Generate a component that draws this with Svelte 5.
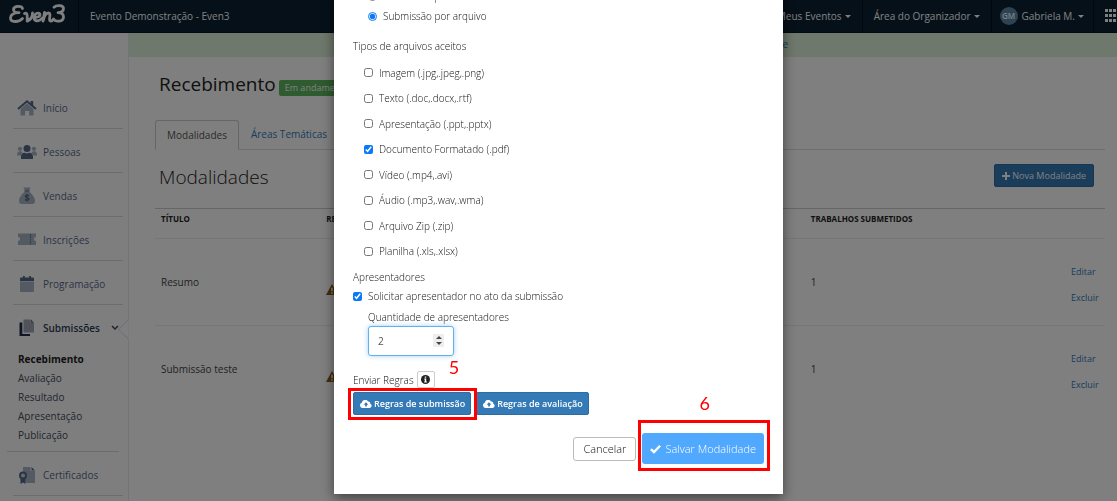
<script>
  const menu = [
    { id: 'home', label: 'Início' },
    { id: 'people', label: 'Pessoas' },
    { id: 'money', label: 'Vendas' },
    { id: 'ticket', label: 'Inscrições' },
    { id: 'calendar', label: 'Programação' },
    { id: 'files', label: 'Submissões', children: ['Recebimento', 'Avaliação', 'Resultado', 'Apresentação', 'Publicação'] },
    { id: 'certificate', label: 'Certificados' }
  ];
  const rows = [
    { title: 'Resumo', total: 1 },
    { title: 'Submissão teste', total: 1 }
  ];
  let mode = $state('arquivo');
  let types = $state([
    { label: 'Imagem (.jpg,.jpeg,.png)', on: false },
    { label: 'Texto (.doc,.docx,.rtf)', on: false },
    { label: 'Apresentação (.ppt,.pptx)', on: false },
    { label: 'Documento Formatado (.pdf)', on: true },
    { label: 'Vídeo (.mp4,.avi)', on: false },
    { label: 'Áudio (.mp3,.wav,.wma)', on: false },
    { label: 'Arquivo Zip (.zip)', on: false },
    { label: 'Planilha (.xls,.xlsx)', on: false }
  ]);
  let askPresenter = $state(true);
  let presenters = $state(2);
  const step = (n) => (presenters = Math.max(1, presenters + n));
</script>

{#snippet cloud()}
  <svg class="cloud" viewBox="0 0 24 16" aria-hidden="true">
    <path fill="currentColor" fill-rule="evenodd" d="M5.5 16A5.5 5.5 0 0 1 3.6 5.3 6.6 6.6 0 0 1 16 3.2a3.6 3.6 0 0 1 4.4 4.3A4.4 4.4 0 0 1 19.500 16zM12 4.500 7.300 9.300h3V13h3.400V9.300h3z" />
  </svg>
{/snippet}

{#snippet icon(id)}
  <svg class="icon" viewBox="0 0 20 20" aria-hidden="true">
    {#if id === 'home'}
      <path fill="#a9b4c2" d="M3.500 11 10 5.200 16.500 11v6.500h-4.300v-4.600H8v4.600H3.500z" />
      <path fill="none" stroke="#56698a" stroke-width="2" d="M1 11 10 3.300 19 11" />
      <path fill="#56698a" d="M13.600 3h2.600v5l-2.600-2.200z" />
    {:else if id === 'people'}
      <g fill="#a9b4c2"><circle cx="3" cy="6.800" r="2.100" /><circle cx="17" cy="6.800" r="2.100" /><path d="M0 13.500c0-3 1-4.200 3-4.200 1.300 0 2 .5 2.500 1.200L3.800 13.500zM20 13.500c0-3-1-4.200-3-4.200-1.300 0-2 .5-2.500 1.200l1.700 3z" /></g>
      <g fill="#56698a"><circle cx="10" cy="6.400" r="3.500" /><path d="M4 17v-2.300c0-2.600 1.500-4 3.600-4 1.600.7 3.200.7 4.800 0 2.100 0 3.600 1.400 3.600 4V17z" /></g>
    {:else if id === 'money'}
      <path fill="#a9b4c2" d="M6.300 1.500h7.400L12 4.500H8zM7.600 6h4.800c3 2 5.600 6 5.600 9 0 1.800-1 3-2.800 3H4.800C3 18 2 16.800 2 15c0-3 2.600-7 5.600-9z" />
      <path fill="#56698a" d="M7.500 4.300h5v1.400h-5z" />
      <path fill="none" stroke="#56698a" stroke-width="1.200" d="M12 9.800c-.8-.8-3.700-1-3.700.6 0 1.700 3.600.8 3.600 2.600 0 1.600-3 1.500-3.900.5M10 8v7.500" />
    {:else if id === 'ticket'}
      <path fill="#a9b4c2" fill-rule="evenodd" d="M1 3.500h18v3.600a2 2 0 0 0 0 4v3.900H1v-3.900a2 2 0 0 0 0-4z" />
      <path stroke="#56698a" stroke-width="1.200" stroke-dasharray="1.400 1.200" d="M13.500 4v11" />
    {:else if id === 'calendar'}
      <path fill="#a9b4c2" d="M3 7.500h14v9.200c0 .8-.5 1.300-1.300 1.300H4.300c-.8 0-1.300-.5-1.300-1.300z" />
      <path fill="#56698a" d="M3 7V4.800c0-.8.500-1.300 1.300-1.300H6V2h1.800v1.500h4.400V2H14v1.500h1.700c.8 0 1.300.5 1.300 1.300V7z" />
    {:else if id === 'files'}
      <path fill="#a0a8b4" d="M6.500 1.500h7.300V5H17v9.500H6.500z" /><path fill="#626c80" d="m14 1.500 3 3.300h-3z" />
      <path fill="#1f2c4a" d="M2.500 4.500h2.800V16H13v2H2.500z" />
    {:else}
      <path fill="#a9b4c2" d="M6 2h7.500v4H18v12h-9l-1-4-2-6z" /><path fill="#56698a" d="m14.500 2 3.500 3.500h-3.500z" />
      <circle cx="6" cy="10.500" r="3" fill="#cdd3db" stroke="#56698a" stroke-width="2" /><path fill="#56698a" d="M3.500 13.500h5V19L6 17.500 3.500 19z" />
    {/if}
  </svg>
{/snippet}

<div class="app">
  <header>
    <a class="logo" href="#inicio" aria-label="Even3">
      <svg viewBox="0 0 57 21" aria-hidden="true">
        <g fill="none" stroke="#fff" stroke-width="2.800" stroke-linecap="round" stroke-linejoin="round">
          <path d="M13.500 4.500C13 1.500 5 1.500 4.500 5.200c-.3 2.600 2 3.600 5.500 3.500-5-.2-8.500 2-8.500 5.200 0 4.600 8 4.800 12 .6" />
          <path d="M15.500 9.500c2-.8 2.700.5 2.700 2.500v5.200c3-1.400 5.500-4.400 5.300-8.200" />
          <path d="M25 13.500c3.500 0 6-1 6-3 0-2.500-5.800-1.700-5.800 2.900 0 4.600 5 4.500 8 .6" />
          <path d="M35.500 8.500 34 17.200c1-4.600 3.200-8.400 5.700-8.400 3 0-.7 8.200 1.800 8.400 1 0 1.700-.5 2.300-1.200" />
          <path d="M45 3.200C47 1.200 54.500.800 54.500 4.500c0 2.800-2.500 4-5.500 4.200 3.500 0 5.500 1.500 5.500 4.200 0 4.800-8 5.700-10 2" />
        </g>
      </svg>
    </a>
    <span class="event">Evento Demonstração - Even3</span>
    <nav>
      <a href="#eventos">Meus Eventos <i class="caret"></i></a>
      <a href="#organizador">Área do Organizador <i class="caret"></i></a>
      <a class="account" href="#conta"><span class="avatar">GM</span>Gabriela M. <i class="caret"></i></a>
      <a class="apps" href="#apps" aria-label="Aplicativos">
        <svg viewBox="0 0 16 14" aria-hidden="true"><path fill="#fff" d="M0 0h3v3H0zM4 0h3v3H4zM8 0h3v3H8zM12 0h3v3h-3zM0 5h3v3H0zM4 5h3v3H4zM8 5h3v3H8zM12 5h3v3h-3zM0 10h3v3H0zM4 10h3v3H4zM8 10h3v3H8zM12 10h3v3h-3z" /></svg>
      </a>
    </nav>
  </header>

  <div class="body">
    <aside>
      <ul class="menu">
        {#each menu as item}
          <li class:open={item.children}>
            <a class="item" href="#{item.id}">
              {@render icon(item.id)}<span>{item.label}</span>
              {#if item.children}
                <svg class="chev" viewBox="0 0 8 6" aria-hidden="true"><path fill="none" stroke="#3c4658" stroke-width="1.500" d="m1 1 3 3 3-3" /></svg>
              {/if}
            </a>
            {#if item.children}
              <i class="notch"></i>
              <ul class="sub">
                {#each item.children as child, i}
                  <li><a href="#{item.id}-{i}" class:current={i === 0}>{child}</a></li>
                {/each}
              </ul>
            {/if}
          </li>
        {/each}
      </ul>
    </aside>

    <main>
      <div class="alert">Para receber submissões, seu evento precisa estar publicado. <a href="#publicar">Publique</a></div>
      <div class="content">
        <h1>Recebimento <span class="label">Em andamento</span></h1>
        <div class="tabs">
          <a class="tab active" href="#modalidades">Modalidades</a>
          <a class="tab" href="#areas">Áreas Temáticas</a>
        </div>
        <div class="bar">
          <h2>Modalidades</h2>
          <button class="primary"><svg class="plus" viewBox="0 0 10 10" aria-hidden="true"><path fill="currentColor" d="M3.700 0h2.600v3.700H10v2.600H6.300V10H3.700V6.300H0V3.700h3.700z" /></svg>Nova Modalidade</button>
        </div>
        <table>
          <thead><tr><th class="c1">TÍTULO</th><th class="c2">REGRAS</th><th class="c3">TRABALHOS SUBMETIDOS</th><th class="c4"></th></tr></thead>
          <tbody>
            {#each rows as row}
              <tr>
                <td>{row.title}</td>
                <td><svg class="warn" viewBox="0 0 12 11" aria-label="Atenção"><path fill="#8a5a14" fill-rule="evenodd" d="M6 0 12 11H0zM5.200 3.700v3.600h1.600V3.700zM5.200 8.200v1.500h1.600V8.200z" /></svg></td>
                <td>{row.total}</td>
                <td class="actions"><a href="#editar">Editar</a><a href="#excluir">Excluir</a></td>
              </tr>
            {/each}
          </tbody>
        </table>
      </div>
    </main>
  </div>
</div>

<div class="backdrop">
  <form class="modal" onsubmit={(e) => e.preventDefault()}>
    <label class="radio"><input type="radio" value="texto" bind:group={mode} />Submissão por texto</label>
    <label class="radio"><input type="radio" value="arquivo" bind:group={mode} />Submissão por arquivo</label>
    <fieldset>
      <legend>Tipos de arquivos aceitos</legend>
      <div class="types">
        {#each types as t}
          <label class="check"><input type="checkbox" bind:checked={t.on} />{t.label}</label>
        {/each}
      </div>
    </fieldset>
    <div class="title">Apresentadores</div>
    <label class="ask"><input type="checkbox" bind:checked={askPresenter} />Solicitar apresentador no ato da submissão</label>
    <div class="qty">
      <label for="qty">Quantidade de apresentadores</label>
      <div class="number">
        <input id="qty" type="number" min="1" bind:value={presenters} />
        <span class="spin">
          <button type="button" aria-label="Aumentar" onclick={() => step(1)}><i class="up"></i></button>
          <button type="button" aria-label="Diminuir" onclick={() => step(-1)}><i class="down"></i></button>
        </span>
      </div>
    </div>
    <div class="rules">
      <span>Enviar Regras</span>
      <button type="button" class="info" aria-label="Informações">
        <svg viewBox="0 0 10 10" aria-hidden="true"><circle cx="5" cy="5" r="5" fill="#222" /><path fill="#fff" d="M4.200 1.700h1.600v1.400H4.200zM3.600 4h2.200v3.200h.7v1h-3v-1h.7V5h-.6z" /></svg>
      </button>
    </div>
    <div class="uploads">
      <div class="marked"><button type="button" class="primary strong">{@render cloud()}Regras de submissão</button><span class="frame five"></span><b class="num n5">5</b></div>
      <button type="button" class="primary strong">{@render cloud()}Regras de avaliação</button>
    </div>
    <div class="footer">
      <button type="button" class="cancel">Cancelar</button>
      <div class="marked">
        <button class="save"><svg class="tick" viewBox="0 0 12 10" aria-hidden="true"><path fill="none" stroke="currentColor" stroke-width="2.600" d="m1 5.200 3.300 3.200L11 1.500" /></svg>Salvar Modalidade</button>
        <span class="frame six"></span><b class="num n6">6</b>
      </div>
    </div>
  </form>
</div>

<style>
  :global(body) { font: 10px/16px 'Open Sans', sans-serif; color: #333; }
  * { box-sizing: border-box; }
  a { color: #337ab7; text-decoration: none; }
  ul { list-style: none; margin: 0; padding: 0; }
  button, input { font: inherit; }
  button { cursor: pointer; }

  .app { height: 100vh; overflow: hidden; display: flex; flex-direction: column; background: #fff; }
  header { flex: none; height: 33px; display: flex; align-items: center; background: #0a2032; color: #fff; border-bottom: 1px solid #061522; }
  .logo { width: 79px; height: 100%; padding: 4px 0 0 9px; border-right: 1px solid #050f18; }
  .logo svg { width: 57px; height: 21px; display: block; }
  .event { padding-left: 11px; }
  nav { margin-left: auto; display: flex; height: 100%; }
  nav a { color: #fff; display: flex; align-items: center; padding: 0 11px; border-right: 1px solid #050f18; }
  nav a.account { padding: 0 9px 0 8px; }
  nav a.apps { padding: 0 0 0 11px; border: 0; width: 23px; overflow: hidden; }
  .apps svg { width: 16px; height: 14px; flex: none; }
  .caret { border: 3px solid transparent; border-top-color: #fff; border-bottom: 0; margin-left: 3px; }
  .avatar { width: 18px; height: 18px; border-radius: 50%; background: #5786a8; font-size: 8px; line-height: 18px; text-align: center; margin-right: 4px; font-weight: 600; }

  .body { flex: 1; display: flex; min-height: 0; }
  aside { flex: none; width: 129px; padding-top: 52px; background: #fdfdfd; border-right: 1px solid #e4eaee; color: #56698a; }
  .menu > li { position: relative; margin: 0 5px 0 13px; border-bottom: 1px solid #d5d9df; }
  .menu > li.open { margin: 0 9px 0 7px; }
  .item { display: flex; align-items: center; height: 43px; padding: 3px 0 0 4px; color: #56698a; }
  .open .item { padding-left: 10px; color: #2c3a56; font-weight: 600; }
  .icon { width: 20px; height: 20px; margin-right: 6px; }
  .chev { width: 8px; height: 6px; margin-left: auto; }
  .notch { position: absolute; right: -17px; top: 17px; width: 15px; height: 15px; background: #fff; border: 1px solid #d5dde2; border-top-color: transparent; border-right-color: transparent; transform: rotate(45deg); clip-path: polygon(0 0, 0 100%, 100% 100%); }
  .sub { padding: 2px 0 6px 11px; line-height: 19px; }
  .sub a { color: #444c5a; }
  .sub a.current { font-weight: 700; color: #222; }

  main { flex: 1; min-width: 0; }
  .alert { height: 24px; line-height: 23px; background: #dff0d8; text-align: center; color: #3c763d; }
  .content { padding: 0 12px 0 26px; }
  h1, h2 { margin: 0; font-weight: 300; font-size: 19px; line-height: 26px; color: #222; }
  h1 { padding: 14px 0 0 4px; height: 63px; display: flex; gap: 3px; font-weight: 400; }
  .label { align-self: flex-start; margin-top: 9px; padding: 0 6px; border-radius: 2px; background: #5cb85c; color: #fff; font-size: 9px; line-height: 16px; }
  .tabs { display: flex; height: 30px; border-bottom: 1px solid #ddd; }
  .tab { padding: 6px 12px; }
  .tab.active { height: 30px; padding: 6px 11px; border: 1px solid #ccc; border-bottom-color: #fff; border-radius: 3px 3px 0 0; color: #555; background: #fff; }
  .bar { display: flex; justify-content: space-between; padding: 14px 11px 20px 4px; height: 58px; }
  .primary { display: flex; align-items: center; justify-content: center; height: 23px; padding: 0 7px; border: 1px solid #2e6da4; border-radius: 2px; background: #337ab7; color: #fff; font-size: 9px; white-space: nowrap; }
  .plus { width: 8px; height: 8px; margin-right: 2px; }
  table { width: 100%; border-collapse: collapse; table-layout: fixed; }
  th, td { padding: 0 6px; text-align: left; border-top: 1px solid #ececec; }
  th { height: 30px; padding-bottom: 10px; font-size: 8px; line-height: 12px; color: #222; border-top-color: #ccc; }
  td { height: 87px; color: #444; }
  .c1 { width: 17.400%; } .c2 { width: 51%; } .c4 { width: 40px; }
  td.actions { padding: 6px 0 0 6px; font-size: 9px; }
  .actions a { display: block; line-height: 26px; }
  .warn { width: 12px; height: 11px; display: block; margin-top: 14px; }

  .backdrop { position: fixed; inset: 0; overflow: hidden; display: flex; align-items: flex-end; justify-content: center; padding-bottom: 7px; background: rgba(0, 0, 0, .5); }
  .modal { width: 449px; padding: 0 19px 30px; background: #fff; box-shadow: 0 4px 12px rgba(0, 0, 0, .5); font-weight: 300; color: #111; }
  .modal input[type='checkbox'], .modal input[type='radio'] { width: 9px; height: 9px; margin: 0; accent-color: #0b79f7; flex: none; }
  .modal label { display: flex; align-items: center; }
  .radio { padding-left: 15px; gap: 6px; height: 20px; }
  fieldset { border: 0; margin: 12px 0 0; padding: 0; min-width: 0; }
  legend { padding: 0; margin-bottom: 6px; }
  .types { display: grid; grid-auto-rows: 1fr; height: 204px; }
  .check { padding-left: 11px; gap: 6px; }
  .title { margin-top: 5px; }
  .ask { gap: 6px; height: 22px; }
  .qty { padding-left: 15px; margin-top: 2px; }
  .number { position: relative; width: 86px; margin-top: 1px; }
  .number input { display: block; width: 100%; height: 30px; padding: 0 9px; border: 1px solid #66afe9; border-radius: 3px; outline: 0; box-shadow: 0 0 5px rgba(102, 175, 233, .6); color: #555; font-weight: 400; appearance: textfield; }
  .number input::-webkit-inner-spin-button { display: none; }
  .spin { position: absolute; right: 10px; top: 8px; width: 11px; height: 13px; background: #eee; display: flex; flex-direction: column; justify-content: center; gap: 2px; }
  .spin button { padding: 0; border: 0; background: none; height: 4px; display: flex; justify-content: center; align-items: center; }
  .up, .down { border: 3px solid transparent; }
  .up { border-bottom-color: #444; border-top: 0; }
  .down { border-top-color: #444; border-bottom: 0; }
  .rules { display: flex; align-items: center; gap: 3px; margin-top: 15px; height: 17px; }
  .info { width: 18px; height: 17px; padding: 0; border: 1px solid #ccc; border-radius: 2px; background: #fff; display: grid; place-items: center; }
  .info svg { width: 9px; height: 9px; }
  .uploads { display: flex; gap: 5px; margin-top: 4px; }
  .strong { font-weight: 600; padding: 0 5px 0 6px; }
  .cloud { width: 12px; height: 8px; margin-right: 2px; }
  .marked { position: relative; }
  .frame { position: absolute; border: 3px solid #f00; pointer-events: none; }
  .five { inset: -4px -6px -5px -5px; }
  .six { inset: -13px -6px -7px -4px; }
  .num { position: absolute; font: 18px/18px Lato, sans-serif; color: #f00; }
  .n5 { right: 12px; top: -34px; }
  .n6 { left: 57px; top: -39px; }
  .footer { display: flex; align-items: center; justify-content: flex-end; gap: 6px; margin-top: 18px; font-size: 11px; }
  .cancel { height: 24px; padding: 0 9px; border: 1px solid #bbb; border-radius: 3px; background: #fff; color: #111; }
  .save { display: flex; align-items: center; height: 31px; padding: 0 8px; border: 0; border-radius: 3px; background: #51a9ff; color: #fff; }
  .tick { width: 11px; height: 10px; margin-right: 4px; }
</style>
